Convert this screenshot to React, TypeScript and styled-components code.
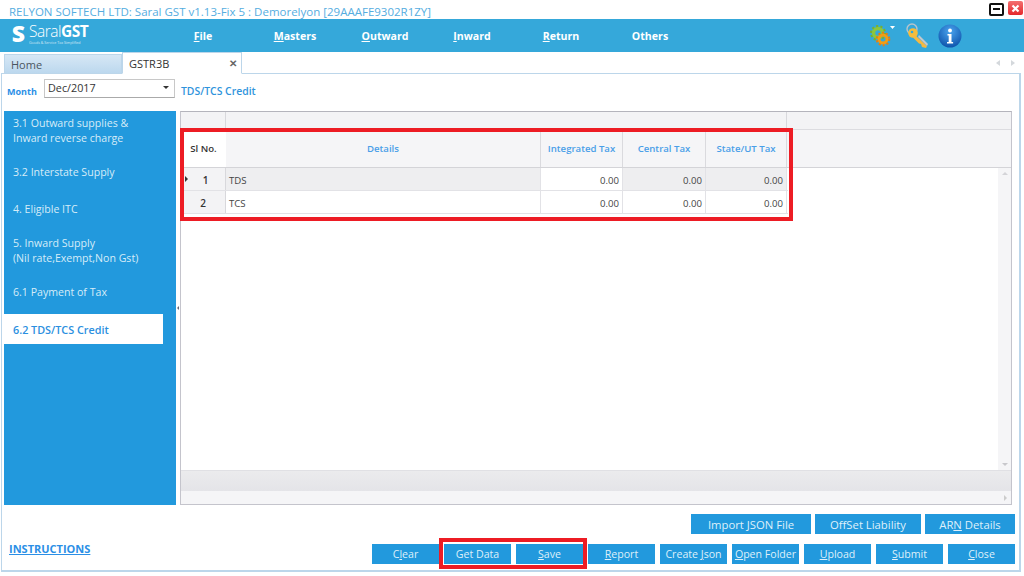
import React from "react";
import styled, { createGlobalStyle } from "styled-components";

const Global = createGlobalStyle`
  html, body { margin: 0; padding: 0; background: #fff; }
  * { box-sizing: border-box; }
`;

const font = `"Open Sans", "Noto Sans", "Liberation Sans", sans-serif`;

const Root = styled.div`
  position: relative;
  width: 1024px;
  height: 576px;
  overflow: hidden;
  background: #fff;
  font-family: ${font};
`;

const TitleBar = styled.div`
  height: 19px;
  display: flex;
  align-items: center;
  padding: 0 1px 0 9px;
  color: #55addf;
  font-size: 11.5px;
  white-space: nowrap;
`;
const TitleText = styled.span`
  flex: 1;
  margin-top: 3px;
`;
const MinButton = styled.div`
  width: 15px;
  height: 13px;
  border: 2px solid #111;
  border-radius: 2px;
  display: flex;
  align-items: center;
  justify-content: center;
  margin-right: 4px;
  margin-top: -1px;
  &::after {
    content: "";
    width: 7px;
    height: 2px;
    background: #111;
  }
`;
const CloseButton = styled.div`
  width: 15px;
  height: 14px;
  border-radius: 2px;
  background: linear-gradient(#f47070, #e4282c);
  display: flex;
  align-items: center;
  justify-content: center;
  margin-top: -3px;
`;

const NavBar = styled.div`
  height: 33px;
  background: #35a8da;
  display: flex;
  align-items: center;
  color: #fff;
`;
const Logo = styled.div`
  width: 158px;
  padding-left: 10px;
  display: flex;
  align-items: flex-start;
  color: #fff;
  height: 26px;
`;
const LogoBadge = styled.div`
  width: 17px;
  height: 20px;
  font-size: 23px;
  font-weight: 800;
  line-height: 20px;
  text-align: center;
`;
const LogoWords = styled.div`
  margin-left: 2px;
  display: flex;
  flex-direction: column;
`;
const LogoName = styled.div`
  font-size: 15.5px;
  line-height: 17px;
  font-weight: 300;
  letter-spacing: -0.5px;
  b { font-weight: 700; }
`;
const LogoTag = styled.div`
  font-size: 3.6px;
  line-height: 6px;
  white-space: nowrap;
  opacity: 0.75;
`;
const MenuItem = styled.div<{ $w: number }>`
  width: ${(p) => p.$w}px;
  text-align: center;
  font-size: 10.6px;
  font-weight: 700;
`;
const NavIcons = styled.div`
  margin-left: auto;
  padding-right: 62px;
  display: flex;
  align-items: center;
  gap: 8px;
`;

const TabStrip = styled.div`
  height: 21px;
  display: flex;
  align-items: flex-end;
  padding-left: 4px;
  position: relative;
`;
const Tab = styled.div<{ $active?: boolean; $w: number }>`
  width: ${(p) => p.$w}px;
  height: ${(p) => (p.$active ? 22 : 20)}px;
  display: flex;
  align-items: center;
  justify-content: space-between;
  padding: 0 ${(p) => (p.$active ? 4 : 0)}px 0 6px;
  font-size: 11px;
  color: ${(p) => (p.$active ? "#333" : "#4a5560")};
  border: 1px solid #bcd6ea;
  border-bottom: ${(p) => (p.$active ? "1px solid #fff" : "1px solid #bcd6ea")};
  background: ${(p) => (p.$active ? "#fff" : "linear-gradient(#d6e7f5, #bcd8ee)")};
  position: relative;
  z-index: 1;
  margin-bottom: -1px;
`;
const TabClose = styled.span`
  color: #666;
  font-size: 10px;
  font-weight: 700;
  margin-right: 0;
`;
const TabArrows = styled.div`
  margin-left: auto;
  padding-right: 9px;
  align-self: center;
  display: flex;
  gap: 11px;
`;
const TabArrow = styled.div<{ $dir: "l" | "r" }>`
  width: 0;
  height: 0;
  border-top: 3px solid transparent;
  border-bottom: 3px solid transparent;
  ${(p) => (p.$dir === "l" ? "border-right: 4px solid #d4d8dc;" : "border-left: 4px solid #d4d8dc;")}
`;

const Frame = styled.div`
  margin: 0 3px 0 1px;
  height: 499px;
  border: 1px solid #bcd6ea;
  border-width: 1px 2px 2px 1px;
  padding: 5px 0 0 2px;
  display: flex;
  flex-direction: column;
`;
const MonthRow = styled.div`
  height: 19px;
  display: flex;
  align-items: center;
`;
const MonthLabel = styled.label`
  width: 40px;
  padding-left: 3px;
  margin-top: 5px;
  color: #2b8fe6;
  font-size: 9px;
  font-weight: 700;
`;
const MonthSelect = styled.div`
  width: 131px;
  height: 19px;
  border: 1px solid #c8c8c8;
  border-bottom-color: #aaa;
  display: flex;
  align-items: center;
  justify-content: space-between;
  padding: 0 5px 2px 3px;
  font-size: 10.8px;
  color: #333;
  &::after {
    content: "";
    border-left: 3px solid transparent;
    border-right: 3px solid transparent;
    border-top: 3px solid #333;
  }
`;
const SectionTitle = styled.div`
  margin-left: 6px;
  margin-top: 5px;
  color: #2f94dc;
  font-size: 10.4px;
  font-weight: 600;
`;

const Main = styled.div`
  margin-top: 13px;
  height: 394px;
  display: flex;
  margin-right: 7px;
`;
const Sidebar = styled.div`
  width: 172px;
  background: #2299dd;
  display: flex;
  flex-direction: column;
  gap: 7px;
`;
const SideItem = styled.div<{ $active?: boolean; $tall?: boolean }>`
  width: 159px;
  height: ${(p) => (p.$tall ? 39 : 30)}px;
  display: flex;
  align-items: center;
  padding-left: 9px;
  font-size: ${(p) => (p.$active ? 10.8 : 10.6)}px;
  line-height: 15px;
  color: ${(p) => (p.$active ? "#2b8fe0" : "#d6ecf8")};
  background: ${(p) => (p.$active ? "#fff" : "transparent")};
  font-weight: ${(p) => (p.$active ? 600 : 400)};
  white-space: nowrap;
`;
const Splitter = styled.div`
  width: 4px;
  display: flex;
  align-items: center;
  justify-content: center;
  &::after {
    content: "";
    border-top: 2px solid transparent;
    border-bottom: 2px solid transparent;
    border-right: 2px solid #667;
  }
`;
const GridPanel = styled.div`
  flex: 1;
  display: flex;
  flex-direction: column;
  border: 1px solid #c4c4cc;
  border-top-color: #b4b4bc;
`;
const BandRow = styled.div`
  height: 18px;
  flex: none;
  display: flex;
  background: #f3f3f5;
  border-bottom: 1px solid #dcdce0;
`;
const BandCell = styled.div<{ $w: number }>`
  width: ${(p) => p.$w}px;
  border-right: 1px solid #d8d8dc;
`;
const HeaderRow = styled.div`
  height: 38px;
  flex: none;
  display: flex;
  background: #f5f5f7;
  border-bottom: 1px solid #d4d4d8;
`;
const HeadCell = styled.div<{ $w: number; $corner?: boolean }>`
  width: ${(p) => p.$w}px;
  display: flex;
  align-items: center;
  justify-content: center;
  font-size: 9.6px;
  font-weight: 600;
  white-space: nowrap;
  color: ${(p) => (p.$corner ? "#333" : "#4a9fe8")};
  background: ${(p) => (p.$corner ? "#fff" : "transparent")};
  border-right: ${(p) => (p.$corner ? "none" : "1px solid #dadade")};
`;
const Body = styled.div`
  flex: 1;
  display: flex;
  min-height: 0;
`;
const Rows = styled.div`
  flex: 1;
`;
const Row = styled.div`
  height: 23px;
  display: flex;
  width: 607px;
  border-bottom: 1px solid #e2e2e6;
`;
const RowHead = styled.div<{ $pointer?: boolean }>`
  width: 45px;
  background: #f3f3f5;
  border-right: 1px solid #d8d8dc;
  position: relative;
  display: flex;
  align-items: center;
  justify-content: center;
  font-size: 10px;
  font-weight: 600;
  color: #333;
  padding: 2px 0 0 ${(p) => (p.$pointer ? 5 : 0)}px;
`;
const RowPointer = styled.div`
  position: absolute;
  left: 4px;
  top: 8px;
  border-top: 3px solid transparent;
  border-bottom: 3px solid transparent;
  border-left: 3px solid #333;
`;
const Cell = styled.div<{ $w: number; $shade?: boolean; $num?: boolean }>`
  width: ${(p) => p.$w}px;
  display: flex;
  align-items: center;
  justify-content: ${(p) => (p.$num ? "flex-end" : "flex-start")};
  padding: 2px 3px 0;
  font-size: 9.6px;
  color: #444;
  background: ${(p) => (p.$shade ? "#eeeef0" : "#fff")};
  border-right: 1px solid #e2e2e6;
`;
const VScroll = styled.div`
  width: 13px;
  flex: none;
  background: #f5f5f7;
  display: flex;
  flex-direction: column;
  justify-content: space-between;
  align-items: center;
  padding: 4px 0;
`;
const VArrow = styled.div<{ $up?: boolean }>`
  border-left: 3px solid transparent;
  border-right: 3px solid transparent;
  ${(p) => (p.$up ? "border-bottom: 3px solid #d4d4d8;" : "border-top: 3px solid #c8c8cc;")}
`;
const SummaryBand = styled.div`
  height: 21px;
  flex: none;
  background: linear-gradient(#ebebed, #e4e4e8);
  border-top: 1px solid #e0e0e4;
`;
const HScroll = styled.div`
  flex: 0 0 13px;
  background: #f5f5f7;
  display: flex;
  align-items: center;
  justify-content: flex-end;
  padding-right: 4px;
  &::after {
    content: "";
    border-top: 3px solid transparent;
    border-bottom: 3px solid transparent;
    border-left: 3px solid #ccc;
  }
`;

const Footer = styled.div`
  padding: 9px 4px 0 0;
  display: flex;
  flex-direction: column;
  gap: 10px;
`;
const ButtonRow = styled.div<{ $gap: number }>`
  display: flex;
  justify-content: flex-end;
  align-items: center;
  gap: ${(p) => p.$gap}px;
`;
const Instructions = styled.a`
  margin-right: auto;
  margin-left: 5px;
  margin-top: -11px;
  color: #2b8fe6;
  font-size: 11px;
  font-weight: 700;
  text-decoration: underline;
`;
const Btn = styled.div<{ $w?: number; $large?: boolean }>`
  width: ${(p) => p.$w ?? 67}px;
  height: 20px;
  background: #2299dd;
  color: #dff0fa;
  display: flex;
  align-items: center;
  justify-content: center;
  font-size: ${(p) => (p.$large ? 11.3 : 10.6)}px;
  white-space: nowrap;
`;
const Highlight = styled.div<{ $l: number; $t: number; $w: number; $h: number }>`
  position: absolute;
  left: ${(p) => p.$l}px;
  top: ${(p) => p.$t}px;
  width: ${(p) => p.$w}px;
  height: ${(p) => p.$h}px;
  border: 4px solid #ed1c24;
  pointer-events: none;
`;

const Gears = () => (
  <svg width="26" height="24" viewBox="0 0 26 24">
    <g fill="none" strokeLinecap="butt">
      <circle cx="8" cy="9" r="4.5" stroke="#8cc63f" strokeWidth="3.5" />
      <circle cx="8" cy="9" r="7" stroke="#7ab02e" strokeWidth="2" strokeDasharray="2.2 2.2" />
      <circle cx="13" cy="15" r="4" stroke="#f39c12" strokeWidth="3" />
      <circle cx="13" cy="15" r="6.3" stroke="#e67e10" strokeWidth="2" strokeDasharray="2 2" />
    </g>
    <path d="M20 2h5l-2.5 3z" fill="#fff" />
  </svg>
);
const KeyIcon = () => (
  <svg width="26" height="26" viewBox="0 0 26 26">
    <circle cx="8" cy="6" r="5" fill="none" stroke="#b8c4cc" strokeWidth="1.4" />
    <circle cx="9" cy="10" r="4.8" fill="#f6bd3c" />
    <path d="M11 12l12 11-1 2-4-1-1-3-2-.5-6-6z" fill="#f4b942" />
    <path d="M15 12l9 9-1 2-9-9z" fill="#c4c8cc" />
    <circle cx="8" cy="9" r="1.3" fill="#35a8da" />
  </svg>
);
const InfoIcon = () => (
  <svg width="24" height="24" viewBox="0 0 24 24">
    <defs>
      <radialGradient id="ib" cx="50%" cy="30%" r="75%">
        <stop offset="0" stopColor="#4aa4ee" />
        <stop offset="1" stopColor="#0b4fa8" />
      </radialGradient>
    </defs>
    <circle cx="12" cy="12" r="11.5" fill="url(#ib)" />
    <circle cx="12" cy="6.5" r="1.9" fill="#fff" />
    <path d="M9.5 10h4v8h1.6v1.4H9v-1.4h1.7v-6.6H9.5z" fill="#fff" />
  </svg>
);

const colW = [45, 315, 82, 83, 81];

const dataRows = [
  { sl: "1", name: "TDS", shade: true, pointer: true },
  { sl: "2", name: "TCS", shade: false, pointer: false },
];

export default function App() {
  return (
    <Root>
      <Global />
      <TitleBar>
        <TitleText>RELYON SOFTECH LTD: Saral GST v1.13-Fix 5 : Demorelyon [29AAAFE9302R1ZY]</TitleText>
        <MinButton />
        <CloseButton>
          <svg width="9" height="9" viewBox="0 0 9 9">
            <path d="M1.5 1.5l6 6M7.5 1.5l-6 6" stroke="#fff" strokeWidth="2.2" />
          </svg>
        </CloseButton>
      </TitleBar>
      <NavBar>
        <Logo>
          <LogoBadge>S</LogoBadge>
          <LogoWords>
            <LogoName>
              Saral<b>GST</b>
            </LogoName>
            <LogoTag>Goods &amp; Service Tax Simplified</LogoTag>
          </LogoWords>
        </Logo>
        <MenuItem $w={90}><u>F</u>ile</MenuItem>
        <MenuItem $w={94}><u>M</u>asters</MenuItem>
        <MenuItem $w={86}><u>O</u>utward</MenuItem>
        <MenuItem $w={88}><u>I</u>nward</MenuItem>
        <MenuItem $w={90}><u>R</u>eturn</MenuItem>
        <MenuItem $w={88}>Others</MenuItem>
        <NavIcons>
          <Gears />
          <KeyIcon />
          <InfoIcon />
        </NavIcons>
      </NavBar>
      <TabStrip>
        <Tab $w={118}>Home</Tab>
        <Tab $w={120} $active>
          GSTR3B
          <TabClose>✕</TabClose>
        </Tab>
        <TabArrows>
          <TabArrow $dir="l" />
          <TabArrow $dir="r" />
        </TabArrows>
      </TabStrip>
      <Frame>
        <MonthRow>
          <MonthLabel>Month</MonthLabel>
          <MonthSelect>Dec/2017</MonthSelect>
          <SectionTitle>TDS/TCS Credit</SectionTitle>
        </MonthRow>
        <Main>
          <Sidebar>
            <SideItem $tall>3.1 Outward supplies &amp;<br />Inward reverse charge</SideItem>
            <SideItem>3.2 Interstate Supply</SideItem>
            <SideItem>4. Eligible ITC</SideItem>
            <SideItem $tall>5. Inward Supply<br />(Nil rate,Exempt,Non Gst)</SideItem>
            <SideItem>6.1 Payment of Tax</SideItem>
            <SideItem $active>6.2 TDS/TCS Credit</SideItem>
          </Sidebar>
          <Splitter />
          <GridPanel>
            <BandRow>
              <BandCell $w={45} />
              <BandCell $w={561} />
            </BandRow>
            <HeaderRow>
              <HeadCell $w={colW[0]} $corner>Sl No.</HeadCell>
              <HeadCell $w={colW[1]}>Details</HeadCell>
              <HeadCell $w={colW[2]}>Integrated Tax</HeadCell>
              <HeadCell $w={colW[3]}>Central Tax</HeadCell>
              <HeadCell $w={colW[4]}>State/UT Tax</HeadCell>
            </HeaderRow>
            <Body>
              <Rows>
                {dataRows.map((r) => (
                  <Row key={r.sl}>
                    <RowHead $pointer={r.pointer}>
                      {r.pointer && <RowPointer />}
                      {r.sl}
                    </RowHead>
                    <Cell $w={colW[1]} $shade={r.shade}>{r.name}</Cell>
                    <Cell $w={colW[2]} $num>0.00</Cell>
                    <Cell $w={colW[3]} $num $shade={r.shade}>0.00</Cell>
                    <Cell $w={colW[4]} $num $shade={r.shade}>0.00</Cell>
                  </Row>
                ))}
              </Rows>
              <VScroll>
                <VArrow $up />
                <VArrow />
              </VScroll>
            </Body>
            <SummaryBand />
            <HScroll />
          </GridPanel>
        </Main>
        <Footer>
          <ButtonRow $gap={4}>
            <Btn $w={120} $large>Import JSON File</Btn>
            <Btn $w={106} $large>OffSet Liability</Btn>
            <Btn $w={90} $large>AR<u>N</u>&nbsp;Details</Btn>
          </ButtonRow>
          <ButtonRow $gap={5}>
            <Instructions>INSTRUCTIONS</Instructions>
            <Btn>C<u>l</u>ear</Btn>
            <Btn>Get Data</Btn>
            <Btn><u>S</u>ave</Btn>
            <Btn><u>R</u>eport</Btn>
            <Btn>Create&nbsp;<u>J</u>son</Btn>
            <Btn><u>O</u>pen Folder</Btn>
            <Btn><u>U</u>pload</Btn>
            <Btn><u>S</u>ubmit</Btn>
            <Btn><u>C</u>lose</Btn>
          </ButtonRow>
        </Footer>
      </Frame>
      <Highlight $l={180} $t={128} $w={613} $h={93} />
      <Highlight $l={439} $t={538} $w={148} $h={31} />
    </Root>
  );
}
